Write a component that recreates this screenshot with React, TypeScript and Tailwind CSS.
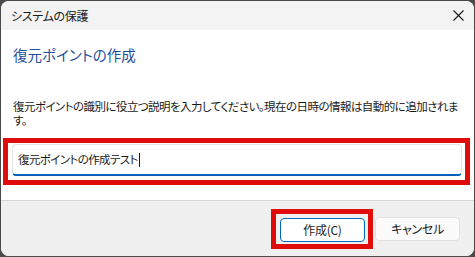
const jp = "font-['Yu_Gothic_UI','Noto_Sans_CJK_JP',sans-serif] [font-feature-settings:'palt']";

function CloseIcon() {
  return (
    <svg width="11" height="11" viewBox="0 0 11 11" aria-hidden="true">
      <path d="M0.5 0.5L10.5 10.5M10.5 0.5L0.5 10.5" stroke="#1a1a1a" strokeWidth="1.1" fill="none" />
    </svg>
  );
}

export default function App() {
  return (
    <div className={`h-[257px] w-[475px] bg-[#4a4a4a] p-px ${jp}`}>
      <div className="flex h-full flex-col overflow-hidden rounded-[8px] bg-white">
        {/* title bar */}
        <div className="flex h-[29px] shrink-0 items-center justify-between bg-[#f3f3f3] pl-[10px] pr-[10px]">
          <span className="text-[12px] leading-none tracking-[-0.3px] text-[#1a1a1a]">システムの保護</span>
          <CloseIcon />
        </div>

        {/* body */}
        <div className="flex-1">
          <h1 className="mt-[15px] px-[12px] text-[14.5px] leading-[20px] text-[#1f4f9e]">復元ポイントの作成</h1>
          <p className="mt-[34px] whitespace-nowrap px-[12px] text-[11.5px] leading-[14px] tracking-[-0.55px] text-[#1a1a1a]">
            復元ポイントの識別に役立つ説明を入力してください。現在の日時の情報は自動的に追加されま
            <br />
            す。
          </p>
          <div className="ml-[2px] mt-[11px] h-[47px] w-[467px] border-[5px] border-[#e00b0b] pl-[4px] pr-[3px] pt-px">
            <div className="flex h-[32px] items-center rounded-[4px] border border-b-2 border-[#e3e3e3] border-b-[#005fb8] bg-white pl-[5px]">
              <span className="text-[11.5px] leading-none tracking-[-0.6px] text-[#1a1a1a]">復元ポイントの作成テスト</span>
              <span className="ml-px h-[14px] w-px bg-[#1a1a1a]" />
            </div>
          </div>
        </div>

        {/* footer */}
        <div className="flex h-[56px] shrink-0 items-center justify-end border-t border-[#d6d6d6] bg-[#f0f0f0] pr-[14px]">
          <div className="border-[5px] border-[#e00b0b] pb-[2px] pl-[4px] pr-[3px] pt-[4px]">
            <button
              type="button"
              className="flex h-[24px] w-[85px] items-center justify-center rounded-[4px] border border-[#0067c0] bg-white text-[12px] tracking-[-0.3px] text-[#1a1a1a]"
            >
              作成(C)
            </button>
          </div>
          <button
            type="button"
            className="ml-[2px] flex h-[24px] w-[85px] items-center justify-center rounded-[4px] border border-[#e0e0e0] bg-[#fbfbfb] text-[12px] tracking-[-0.3px] text-[#1a1a1a]"
          >
            キャンセル
          </button>
        </div>
      </div>
    </div>
  );
}
